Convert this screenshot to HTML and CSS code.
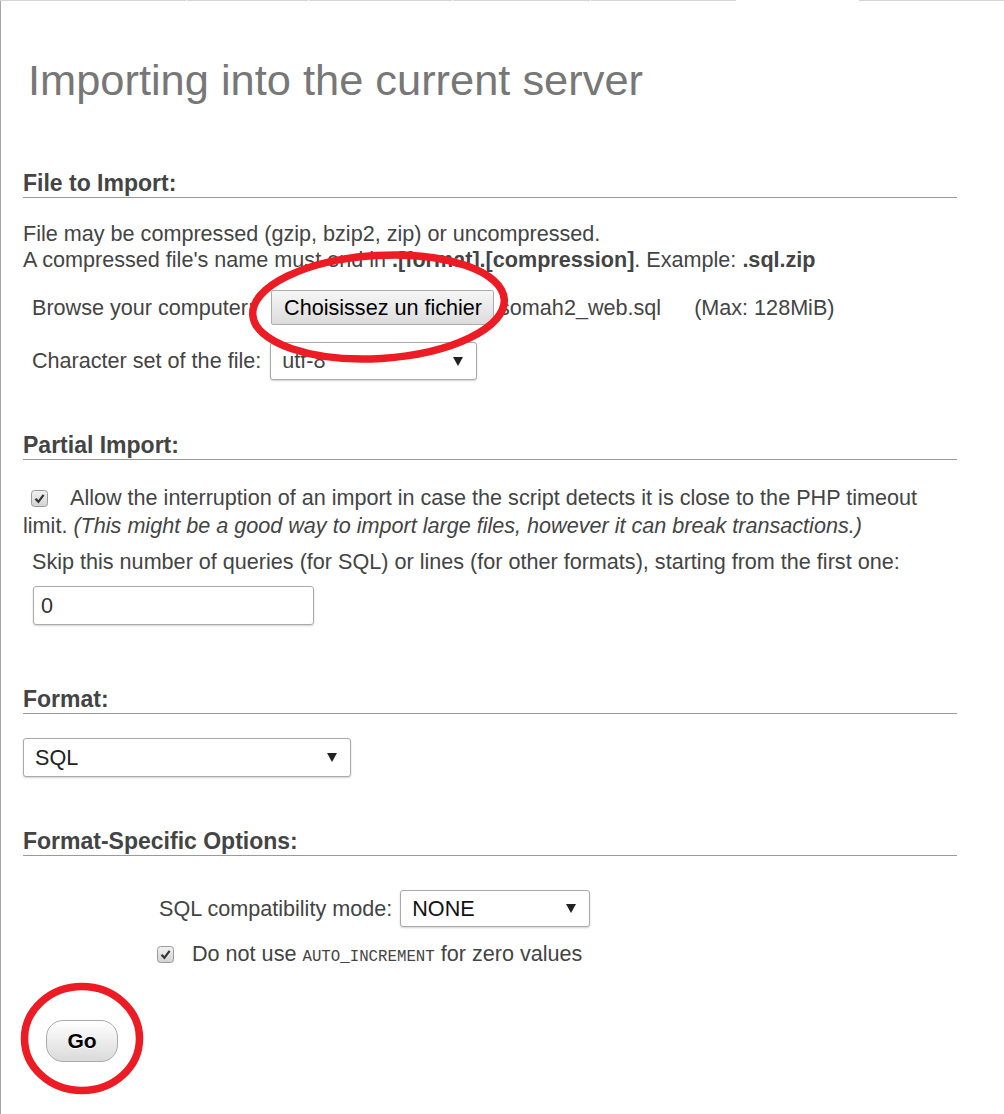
FILE: index.html
```html
<!DOCTYPE html>
<html lang="en">
<head>
<meta charset="utf-8">
<title>Import</title>
<link rel="stylesheet" href="styles.css">
</head>
<body>
<div class="tabs"><span class="t1"></span><span class="t2"></span><span class="t3"></span><span class="t4"></span><span class="t5"></span><span class="t6"></span><span class="t7"></span></div>
<div class="page">
  <h2 class="title">Importing into the current server</h2>

  <div class="group">
    <h3 class="legend">File to Import:</h3>
    <p class="desc">File may be compressed (gzip, bzip2, zip) or uncompressed.<br>A compressed file's name must end in <b>.[format].[compression]</b>. Example: <b>.sql.zip</b></p>
    <div class="row browse">
      <span class="lbl">Browse your computer:</span>
      <span class="filebtn">Choisissez un fichier</span>
      <span class="fname">somah2_web.sql</span>
      <span class="max">(Max: 128MiB)</span>
    </div>
    <div class="row charset">
      <span class="lbl">Character set of the file:</span>
      <span class="select sel-charset"><span class="val">utf-8</span><svg class="arrow" width="10" height="9" viewBox="0 0 10 9"><polygon points="0,0 10,0 5,9"/></svg></span>
    </div>
  </div>

  <div class="group">
    <h3 class="legend leg2">Partial Import:</h3>
    <p class="allow"><svg class="cb" width="17" height="17" viewBox="0 0 17 17"><defs><linearGradient id="cbg" x1="0" y1="0" x2="0" y2="1"><stop offset="0" stop-color="#f2f2f2"/><stop offset="1" stop-color="#d2d2d2"/></linearGradient></defs><rect x="0.5" y="0.5" width="16" height="16" rx="3" fill="url(#cbg)" stroke="#9a9a9a"/><path d="M4.5 8.8 L7.4 11.8 L12.6 4.8" fill="none" stroke="#333" stroke-width="2.2"/></svg><span>Allow the interruption of an import in case the script detects it is close to the PHP timeout limit.</span> <i>(This might be a good way to import large files, however it can break transactions.)</i></p>
    <p class="skip">Skip this number of queries (for SQL) or lines (for other formats), starting from the first one:</p>
    <div class="numinput">0</div>
  </div>

  <div class="group">
    <h3 class="legend leg3">Format:</h3>
    <span class="select sel-format"><span class="val">SQL</span><svg class="arrow" width="10" height="9" viewBox="0 0 10 9"><polygon points="0,0 10,0 5,9"/></svg></span>
  </div>

  <div class="group">
    <h3 class="legend leg4">Format-Specific Options:</h3>
    <div class="row compat">
      <span class="lbl">SQL compatibility mode:</span>
      <span class="select sel-compat"><span class="val">NONE</span><svg class="arrow" width="10" height="9" viewBox="0 0 10 9"><polygon points="0,0 10,0 5,9"/></svg></span>
    </div>
    <p class="autoinc"><svg class="cb cb2" width="17" height="17" viewBox="0 0 17 17"><rect x="0.5" y="0.5" width="16" height="16" rx="3" fill="url(#cbg)" stroke="#9a9a9a"/><path d="M4.5 8.8 L7.4 11.8 L12.6 4.8" fill="none" stroke="#333" stroke-width="2.2"/></svg>Do not use <code>AUTO_INCREMENT</code> for zero values</p>
  </div>

  <div class="actions"><span class="gobtn">Go</span></div>
</div>

<svg class="marks" width="1004" height="1114" viewBox="0 0 1004 1114">
  <ellipse cx="378.5" cy="307" rx="126" ry="51.5" transform="rotate(-3.5 378.5 307)" fill="none" stroke="#ed1c24" stroke-width="7.5"/>
  <ellipse cx="82" cy="1038.5" rx="57.5" ry="52" fill="none" stroke="#ed1c24" stroke-width="7.5"/>
</svg>
</body>
</html>
```
FILE: styles.css
```css
html, body {
  margin: 0;
  padding: 0;
}
body {
  font-family: "Liberation Sans", Arial, sans-serif;
  font-size: 21.6px;
  line-height: 26px;
  color: #444;
  background: #fff;
  width: 1004px;
  height: 1114px;
  overflow: hidden;
}

.tabs {
  display: flex;
  gap: 1px;
  height: 1px;
}
.tabs span { background: #d4d4d4; height: 1px; }
.t1 { width: 186px; }
.t2 { width: 121px; }
.t3 { width: 143px; }
.t4 { width: 137px; }
.t5 { width: 145px; }
.t6 { width: 121px; background: transparent !important; }
.t7 { flex: 1; }

.page {
  border-left: 1px solid #a6a6a6;
  padding: 57px 47px 0 22px;
  height: 1113px;
  box-sizing: border-box;
}

.title {
  margin: 0 0 0 5px;
  font-size: 43.4px;
  line-height: 44px;
  font-weight: normal;
  color: #777;
}

.legend {
  margin: 68px 0 0;
  font-size: 23px;
  line-height: 26px;
  font-weight: bold;
  color: #444;
  padding-bottom: 1px;
  border-bottom: 1px solid #9a9a9a;
}
.leg2 { margin-top: 52px; }
.leg3 { margin-top: 61px; }
.leg4 { margin-top: 51px; }

.desc {
  margin: 23px 0 0;
}

.row {
  display: flex;
  align-items: center;
}
.browse {
  margin-top: 17px;
  height: 35px;
  padding-left: 9px;
}
.filebtn {
  margin-left: 17px;
  height: 35px;
  box-sizing: border-box;
  padding: 0 11px 0 12px;
  display: flex;
  align-items: center;
  color: #000;
  border: 1px solid #adadad;
  border-radius: 2px;
  background: linear-gradient(#f6f6f6, #dcdcdc);
}
.fname { margin-left: 5px; }
.max { margin-left: 33px; }

.charset {
  margin-top: 17px;
  padding-left: 9px;
}
.select {
  display: flex;
  align-items: center;
  justify-content: space-between;
  box-sizing: border-box;
  border: 1px solid #aaa;
  border-radius: 3px;
  background: #fff;
  box-shadow: 0 1px 2px rgba(0,0,0,0.18);
  padding: 0 13px 0 11px;
  color: #222;
}
.arrow { fill: #222; }
.sel-charset { width: 207px; height: 38px; margin-left: 9px; color: #444; }
.sel-format { width: 328px; height: 39px; margin-top: 24px; }
.sel-compat { width: 190px; height: 37px; margin-left: 8px; color: #111; }

.allow {
  margin: 24px 0 0;
  line-height: 28px;
}
.cb {
  display: inline-block;
  vertical-align: -2px;
  margin: 0 22px 0 8px;
}
.skip {
  margin: 9px 0 0;
  padding-left: 9px;
}
.numinput {
  margin: 11px 0 0 10px;
  width: 281px;
  height: 39px;
  box-sizing: border-box;
  border: 1px solid #aaa;
  border-radius: 3px;
  box-shadow: 0 1px 2px rgba(0,0,0,0.18);
  padding-left: 7px;
  display: flex;
  align-items: center;
  color: #333;
}

.compat {
  margin-top: 34px;
  padding-left: 136px;
}
.autoinc {
  margin: 14px 0 0;
  padding-left: 126px;
}
.cb2 { margin-right: 18px; }
code {
  font-family: "Liberation Mono", "Courier New", monospace;
  font-size: 15.75px;
}

.actions {
  display: flex;
  margin-top: 50px;
  padding-left: 23px;
}
.gobtn {
  display: flex;
  align-items: center;
  justify-content: center;
  width: 72px;
  height: 42px;
  box-sizing: border-box;
  border: 1px solid #aaa;
  border-radius: 17px;
  background: linear-gradient(#ffffff, #dadada);
  font-weight: bold;
  font-size: 21px;
  color: #000;
  text-shadow: 0 1px 0 #fff;
}

.marks {
  position: absolute;
  top: 0;
  left: 0;
  pointer-events: none;
}
```
